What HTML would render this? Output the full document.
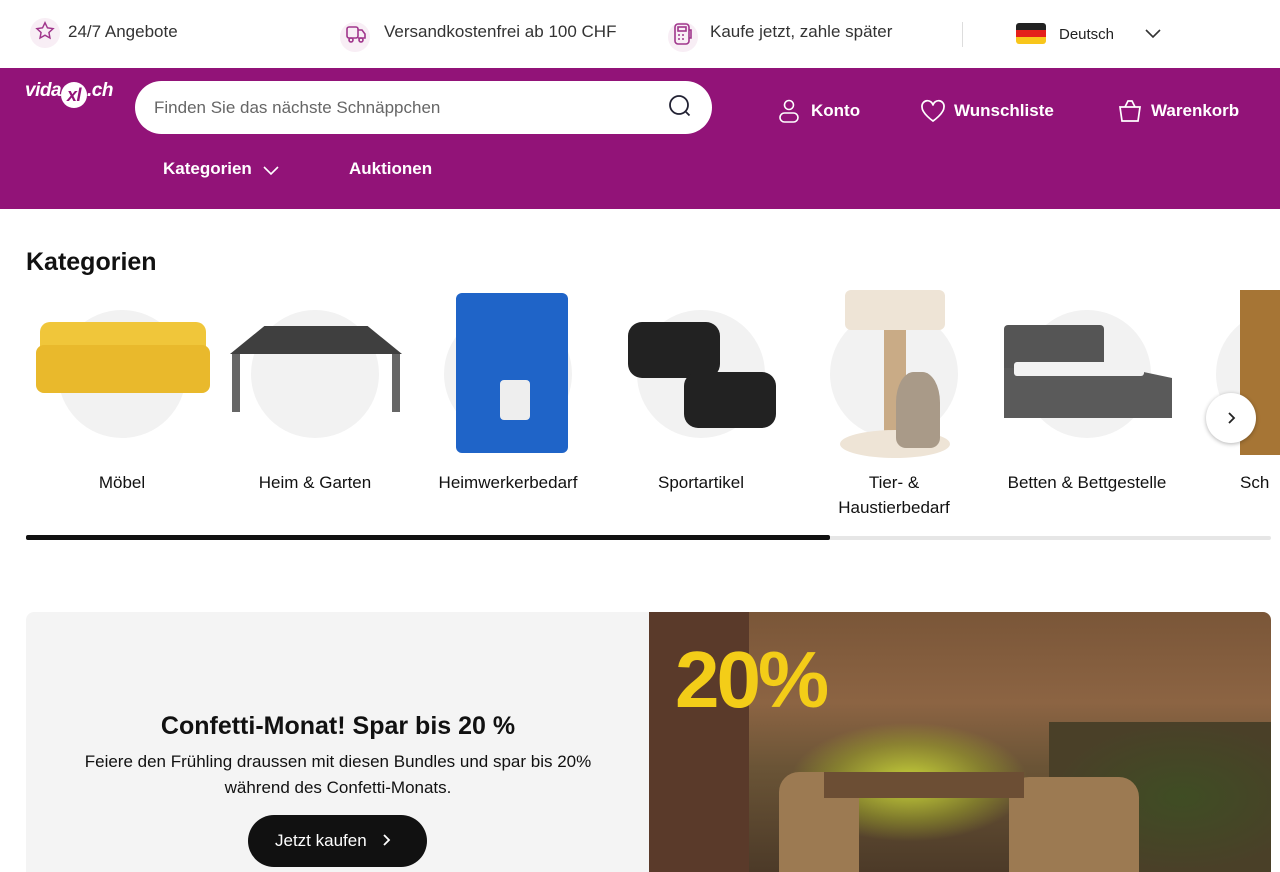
<!DOCTYPE html>
<html><head><meta charset="utf-8"><style>
*{box-sizing:border-box;margin:0;padding:0}
body{width:1280px;height:853px;overflow:hidden;background:#fff;font-family:"Liberation Sans","DejaVu Sans",sans-serif;color:#111;position:relative}
.a{position:absolute}
.top span.t{font-size:17px;color:#333;position:absolute;top:22px}
.ic{position:absolute;width:30px;height:30px;border-radius:50%;background:#f8eef5}
.nav{top:68px;left:0;width:1280px;height:141px;background:#921378}
.w{color:#fff;font-weight:bold;font-size:17px;position:absolute}
.cat{position:absolute;top:470px;font-size:17px;text-align:center;width:190px;line-height:25px}
.circ{position:absolute;top:310px;width:128px;height:128px;border-radius:50%;background:#f2f2f2}
</style></head><body>
<div class="top">
<div class="ic" style="left:30px;top:18px"></div>
<svg class="a" style="left:34px;top:20px" width="22" height="22" viewBox="0 0 24 24" fill="none" stroke="#a0368c" stroke-width="1.6"><path d="M12 3l2.7 5.6 6.1.8-4.5 4.2 1.1 6-5.4-3-5.4 3 1.1-6L3.2 9.4l6.1-.8z"/></svg>
<span class="t" style="left:68px">24/7 Angebote</span>
<div class="ic" style="left:340px;top:22px"></div>
<svg class="a" style="left:344px;top:23px" width="24" height="22" viewBox="0 0 24 22" fill="none" stroke="#a0368c" stroke-width="1.6"><rect x="3" y="4" width="11" height="11" rx="2"/><path d="M14 7h4l3 4v4h-7"/><circle cx="7" cy="17" r="2"/><circle cx="17" cy="17" r="2"/></svg>
<span class="t" style="left:384px">Versandkostenfrei ab 100 CHF</span>
<div class="ic" style="left:668px;top:22px"></div>
<svg class="a" style="left:672px;top:22px" width="22" height="24" viewBox="0 0 22 24" fill="none" stroke="#a0368c" stroke-width="1.6"><rect x="3" y="2" width="14" height="20" rx="3"/><rect x="6" y="5" width="8" height="4"/><path d="M6 13h2M10 13h2M6 17h2M10 17h2M17 8h2v8h-2"/></svg>
<span class="t" style="left:710px">Kaufe jetzt, zahle später</span>
<div class="a" style="left:962px;top:22px;width:1px;height:25px;background:#ddd"></div>
<div class="a" style="left:1016px;top:23px;width:30px;height:21px;border-radius:3px;overflow:hidden"><div style="height:7px;background:#222"></div><div style="height:7px;background:#e4201b"></div><div style="height:7px;background:#f8c61b"></div></div>
<span class="a" style="left:1059px;top:26px;font-size:15px;color:#222">Deutsch</span>
<svg class="a" style="left:1144px;top:27px" width="18" height="12" viewBox="0 0 18 12" fill="none" stroke="#333" stroke-width="1.6"><path d="M2 3l7 7 7-7"/></svg>
</div>
<div class="a nav">
<div class="a" style="left:25px;top:12px;color:#fff;font-style:italic;font-weight:bold;font-size:19px;letter-spacing:-0.5px">vida<span style="display:inline-block;background:#fff;color:#921378;border-radius:50%;width:26px;height:26px;text-align:center;font-size:18px;line-height:26px;vertical-align:-5px">xl</span>.ch</div>
<div class="a" style="left:135px;top:13px;width:577px;height:53px;background:#fff;border-radius:27px"></div>
<span class="a" style="left:154px;top:30px;font-size:17px;color:#666">Finden Sie das nächste Schnäppchen</span>
<svg class="a" style="left:667px;top:26px" width="26" height="26" viewBox="0 0 26 26" fill="none" stroke="#223" stroke-width="1.8"><circle cx="12" cy="11" r="9"/><path d="M18.5 17.5l4 4"/></svg>
<svg class="a" style="left:778px;top:30px" width="22" height="26" viewBox="0 0 22 26" fill="none" stroke="#fff" stroke-width="1.6"><circle cx="11" cy="7" r="4.5"/><rect x="2" y="15" width="18" height="9" rx="4.5"/></svg>
<span class="w" style="left:811px;top:33px">Konto</span>
<svg class="a" style="left:920px;top:31px" width="26" height="24" viewBox="0 0 26 24" fill="none" stroke="#fff" stroke-width="1.7"><path d="M13 22S2 14.5 2 8a5.5 5.5 0 0 1 11-1.5A5.5 5.5 0 0 1 24 8c0 6.5-11 14-11 14z"/></svg>
<span class="w" style="left:954px;top:33px">Wunschliste</span>
<svg class="a" style="left:1117px;top:30px" width="26" height="26" viewBox="0 0 26 26" fill="none" stroke="#fff" stroke-width="1.7"><path d="M8 9l3-6h4l3 6"/><path d="M3 9h20l-2 14H5z"/></svg>
<span class="w" style="left:1151px;top:33px">Warenkorb</span>
<span class="w" style="left:163px;top:91px">Kategorien</span>
<svg class="a" style="left:262px;top:96px" width="18" height="12" viewBox="0 0 18 12" fill="none" stroke="#fff" stroke-width="1.6"><path d="M2 3l7 7 7-7"/></svg>
<span class="w" style="left:349px;top:91px">Auktionen</span>
</div>
<div class="a" style="left:26px;top:248px;font-size:25px;font-weight:bold">Kategorien</div>
<div class="circ" style="left:58px"></div><div class="circ" style="left:251px"></div><div class="circ" style="left:444px"></div><div class="circ" style="left:637px"></div><div class="circ" style="left:830px"></div><div class="circ" style="left:1023px"></div><div class="circ" style="left:1216px"></div>
<!-- sofa -->
<div class="a" style="left:40px;top:322px;width:166px;height:50px;background:#f0c63a;border-radius:10px 10px 4px 4px"></div>
<div class="a" style="left:36px;top:345px;width:174px;height:48px;background:#e9b92c;border-radius:8px"></div>
<!-- gazebo -->
<div class="a" style="left:230px;top:326px;width:172px;height:28px;background:#3f3f3f;clip-path:polygon(20% 0,80% 0,100% 100%,0 100%)"></div>
<div class="a" style="left:232px;top:354px;width:8px;height:58px;background:#666"></div><div class="a" style="left:392px;top:354px;width:8px;height:58px;background:#666"></div>
<!-- case -->
<div class="a" style="left:456px;top:293px;width:112px;height:160px;background:#1f64c8;border-radius:6px"></div>
<div class="a" style="left:500px;top:380px;width:30px;height:40px;background:#eee;border-radius:4px"></div>
<!-- dumbbells -->
<div class="a" style="left:628px;top:322px;width:92px;height:56px;background:#222;border-radius:14px"></div>
<div class="a" style="left:684px;top:372px;width:92px;height:56px;background:#222;border-radius:14px"></div>
<!-- cat tree -->
<div class="a" style="left:845px;top:290px;width:100px;height:40px;background:#eee4d6;border-radius:6px"></div>
<div class="a" style="left:884px;top:330px;width:22px;height:110px;background:#c9ab86"></div>
<div class="a" style="left:840px;top:430px;width:110px;height:28px;background:#eee4d6;border-radius:50%"></div>
<div class="a" style="left:896px;top:372px;width:44px;height:76px;background:#a99a88;border-radius:40% 40% 10px 10px"></div>
<!-- bed -->
<div class="a" style="left:1004px;top:325px;width:100px;height:48px;background:#555;border-radius:4px"></div>
<div class="a" style="left:1004px;top:368px;width:168px;height:50px;background:#5a5a5a;clip-path:polygon(0 0,72% 0,100% 20%,100% 100%,0 100%)"></div>
<div class="a" style="left:1014px;top:362px;width:130px;height:14px;background:#f2f2f2;border-radius:3px"></div>
<div class="a" style="left:1240px;top:290px;width:40px;height:165px;background:#a67535"></div>
<div class="a" style="left:1206px;top:393px;width:50px;height:50px;border-radius:50%;background:#fff;box-shadow:0 1px 4px rgba(0,0,0,.3)"></div>
<svg class="a" style="left:1224px;top:410px" width="14" height="16" viewBox="0 0 14 16" fill="none" stroke="#222" stroke-width="1.8"><path d="M5 3l5 5-5 5"/></svg>
<div class="cat" style="left:27px">Möbel</div>
<div class="cat" style="left:220px">Heim &amp; Garten</div>
<div class="cat" style="left:413px">Heimwerkerbedarf</div>
<div class="cat" style="left:606px">Sportartikel</div>
<div class="cat" style="left:799px">Tier- &amp;<br>Haustierbedarf</div>
<div class="cat" style="left:992px">Betten &amp; Bettgestelle</div>
<div class="cat" style="left:1240px;text-align:left">Sch</div>
<div class="a" style="left:26px;top:536px;width:1245px;height:4px;background:#e6e6e6;border-radius:2px"></div>
<div class="a" style="left:26px;top:535px;width:804px;height:5px;background:#111;border-radius:2px"></div>
<div class="a" style="left:26px;top:612px;width:624px;height:260px;background:#f4f4f4;border-radius:8px 0 0 0"></div>
<div class="a" style="left:26px;top:712px;width:624px;text-align:center;font-size:25px;font-weight:bold">Confetti-Monat! Spar bis 20 %</div>
<div class="a" style="left:26px;top:749px;width:624px;text-align:center;font-size:17px;line-height:26px">Feiere den Frühling draussen mit diesen Bundles und spar bis 20%<br>während des Confetti-Monats.</div>
<div class="a" style="left:248px;top:815px;width:179px;height:52px;background:#111;border-radius:26px;color:#fff;font-size:17px;padding:16px 0 0 27px">Jetzt kaufen</div>
<svg class="a" style="left:380px;top:832px" width="12" height="16" viewBox="0 0 12 16" fill="none" stroke="#fff" stroke-width="1.8"><path d="M4 3l5 5-5 5"/></svg>
<div class="a" style="left:649px;top:612px;width:622px;height:260px;border-radius:0 8px 0 0;overflow:hidden;background:linear-gradient(180deg,#7a5638 0%,#8c6443 35%,#6a5436 60%,#4c3a28 100%)">
<div class="a" style="left:0;top:0;width:100px;height:260px;background:#5a3a2a"></div>
<div class="a" style="left:140px;top:110px;width:240px;height:120px;background:radial-gradient(ellipse,#c8d23a 0%,rgba(160,170,40,.5) 45%,transparent 70%)"></div>
<div class="a" style="left:400px;top:110px;width:222px;height:150px;background:radial-gradient(ellipse at 60% 50%,#3f4d24,#4a4028 70%)"></div>
<div class="a" style="left:130px;top:160px;width:80px;height:100px;background:#9c7a52;border-radius:20px 20px 0 0"></div>
<div class="a" style="left:360px;top:165px;width:130px;height:95px;background:#9c7a52;border-radius:20px 20px 0 0"></div>
<div class="a" style="left:175px;top:160px;width:200px;height:26px;background:#6c4e34"></div>
<div class="a" style="left:26px;top:22px;font-size:80px;font-weight:bold;color:#f3cd18;letter-spacing:-3px">20%</div>
</div>
</body></html>
